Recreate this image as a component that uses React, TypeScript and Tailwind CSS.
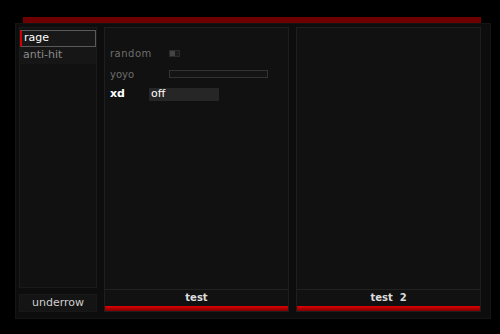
import React from "react";

function Panel({ title, children }: { title: string; children?: React.ReactNode }) {
  return (
    <div className="flex flex-col w-[185px] h-[285px] bg-[#111111] border border-[#1e1e1e]">
      <div className="flex-1 flex flex-col pl-[5px] pt-[16px]">{children}</div>
      <div className="h-[17px] border-t border-[#222] flex items-center justify-center text-[10px] font-bold text-[#ddd] leading-none whitespace-pre">
        {title}
      </div>
      <div className="h-[5px] bg-gradient-to-b from-[#e00000] to-[#800000]" />
    </div>
  );
}

export default function App() {
  return (
    <div
      className="w-[500px] h-[334px] bg-black relative overflow-hidden"
      style={{ fontFamily: '"DejaVu Sans", Verdana, sans-serif' }}
    >
      <div className="absolute left-[23px] top-[17px] w-[458px] h-[6px] bg-[#6e0000]" />
      <div className="absolute left-[15px] top-[23px] w-[476px] h-[296px] bg-[#0d0d0d] border border-[#141414] flex gap-[7px] p-[3px]">
        <div className="flex flex-col w-[78px] gap-[6px]">
          <div className="h-[261px] bg-[#111111] border border-[#1a1a1a] pt-[2px]">
            <div className="h-[17px] w-[76px] border border-[#5a5a5a] border-l-[2px] border-l-[#d00000] bg-[#181818] flex items-center pl-[2px] text-[11px] text-white">
              rage
            </div>
            <div className="h-[17px] bg-[#161616] flex items-center pl-[3px] text-[11px] text-[#8a8a8a]">
              anti-hit
            </div>
          </div>
          <div className="h-[18px] bg-[#141414] border border-[#181818] flex items-center justify-center text-[11px] text-[#cfcfcf]">
            underrow
          </div>
        </div>
        <Panel title="test">
          <div className="flex items-center h-[12px] mt-[3px]">
            <span className="w-[59px] text-[10px] text-[#6e6e6e] tracking-[0.5px]">random</span>
            <div className="w-[11px] h-[7px] bg-[#1c1c1c] border border-[#2a2a2a] flex">
              <div className="w-[5px] h-full bg-[#444]" />
            </div>
          </div>
          <div className="flex items-center h-[12px] mt-[9px]">
            <span className="w-[59px] text-[10px] text-[#6e6e6e]">yoyo</span>
            <div className="w-[99px] h-[8px] bg-[#141414] border border-[#333]" />
          </div>
          <div className="flex items-center h-[13px] mt-[8px]">
            <span className="w-[39px] text-[11px] font-bold text-white">xd</span>
            <div className="w-[70px] h-[13px] bg-[#262626] flex items-center pl-[2px] text-[11px] text-white">
              off
            </div>
          </div>
        </Panel>
        <Panel title="test  2" />
      </div>
    </div>
  );
}
